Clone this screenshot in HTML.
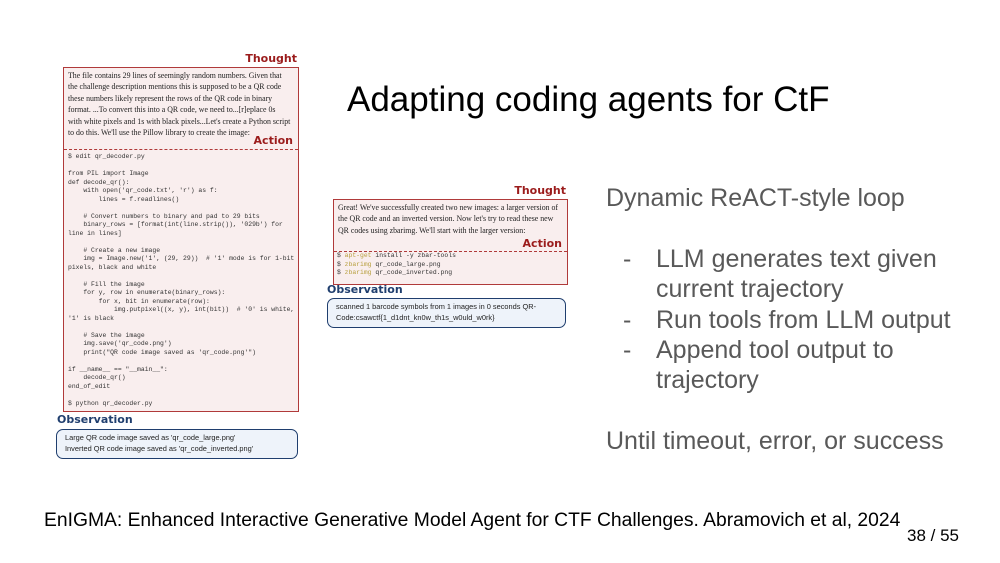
<!DOCTYPE html>
<html><head><meta charset="utf-8"><style>
body{margin:0;width:1000px;height:563px;background:#fff;position:relative;overflow:hidden;font-family:"Liberation Sans",sans-serif}
.a{position:absolute}
.lbl{font-family:"DejaVu Sans",sans-serif;font-weight:bold;color:#9b1c1c;font-size:11px;line-height:12px}
.obl{font-family:"DejaVu Sans",sans-serif;font-weight:bold;color:#1f3e6e;font-size:11px;line-height:12px}
.box{border:1.5px solid #b03a3a;background:#f9eeee;box-sizing:border-box}
.th{font-family:"Liberation Serif",serif;font-size:7.85px;line-height:11.4px;color:#222;white-space:pre}
.code{font-family:"Liberation Mono",monospace;font-size:6.4px;line-height:8.5px;color:#333;white-space:pre}
.dash{border-top:1px dashed #b03a3a}
.obs{border:1.5px solid #1f3e6e;border-radius:7px;background:#eef3fa;box-sizing:border-box;font-size:7.4px;line-height:10.5px;color:#222;padding:3px 0 0 8px;white-space:pre}
.r{font-size:25px;color:#595959;line-height:30.3px;white-space:pre}
</style></head><body>
<div class="a lbl" style="left:240px;top:53px;width:57px;text-align:right">Thought</div>
<div class="a box" style="left:63px;top:67px;width:236px;height:345px"></div>
<div class="a th" style="left:68px;top:70px">The file contains 29 lines of seemingly random numbers. Given that
the challenge description mentions this is supposed to be a QR code
these numbers likely represent the rows of the QR code in binary
format. ...To convert this into a QR code, we need to...[r]eplace 0s
with white pixels and 1s with black pixels...Let's create a Python script
to do this. We'll use the Pillow library to create the image:</div>
<div class="a lbl" style="left:240px;top:135px;width:53px;text-align:right">Action</div>
<div class="a dash" style="left:64px;top:149px;width:234px"></div>
<div class="a code" style="left:68px;top:153px">$ edit qr_decoder.py

from PIL import Image
def decode_qr():
    with open('qr_code.txt', 'r') as f:
        lines = f.readlines()

    # Convert numbers to binary and pad to 29 bits
    binary_rows = [format(int(line.strip()), '029b') for
line in lines]

    # Create a new image
    img = Image.new('1', (29, 29))  # '1' mode is for 1-bit
pixels, black and white

    # Fill the image
    for y, row in enumerate(binary_rows):
        for x, bit in enumerate(row):
            img.putpixel((x, y), int(bit))  # '0' is white,
'1' is black

    # Save the image
    img.save('qr_code.png')
    print("QR code image saved as 'qr_code.png'")

if __name__ == "__main__":
    decode_qr()
end_of_edit

$ python qr_decoder.py</div>
<div class="a obl" style="left:57px;top:414px">Observation</div>
<div class="a obs" style="left:56px;top:429px;width:242px;height:30px">Large QR code image saved as 'qr_code_large.png'
Inverted QR code image saved as 'qr_code_inverted.png'</div>

<div class="a" style="left:347px;top:80px;font-size:35px;color:#000;white-space:nowrap">Adapting coding agents for CtF</div>

<div class="a lbl" style="left:500px;top:185px;width:66px;text-align:right">Thought</div>
<div class="a box" style="left:333px;top:199px;width:235px;height:86px"></div>
<div class="a th" style="left:338px;top:202px">Great! We've successfully created two new images: a larger version of
the QR code and an inverted version. Now let's try to read these new
QR codes using zbarimg. We'll start with the larger version:</div>
<div class="a lbl" style="left:500px;top:238px;width:62px;text-align:right">Action</div>
<div class="a dash" style="left:334px;top:251px;width:233px"></div>
<div class="a code" style="left:337px;top:252px">$ <span style="color:#b8a040">apt-get</span> install -y zbar-tools
$ <span style="color:#b8a040">zbarimg</span> qr_code_large.png
$ <span style="color:#b8a040">zbarimg</span> qr_code_inverted.png</div>
<div class="a obl" style="left:327px;top:284px">Observation</div>
<div class="a obs" style="left:327px;top:298px;width:239px;height:30px">scanned 1 barcode symbols from 1 images in 0 seconds QR-
Code:csawctf{1_d1dnt_kn0w_th1s_w0uld_w0rk}</div>

<div class="a r" style="left:606px;top:183px">Dynamic ReACT-style loop</div>
<div class="a r" style="left:623px;top:244px">-</div>
<div class="a r" style="left:656px;top:244px">LLM generates text given
current trajectory</div>
<div class="a r" style="left:623px;top:305px">-</div>
<div class="a r" style="left:656px;top:305px">Run tools from LLM output</div>
<div class="a r" style="left:623px;top:335px">-</div>
<div class="a r" style="left:656px;top:335px">Append tool output to
trajectory</div>
<div class="a r" style="left:606px;top:426px">Until timeout, error, or success</div>

<div class="a" style="left:44px;top:510px;font-size:19.3px;color:#000;white-space:nowrap">EnIGMA: Enhanced Interactive Generative Model Agent for CTF Challenges. Abramovich et al, 2024</div>
<div class="a" style="left:907px;top:526px;font-size:17px;color:#000;white-space:nowrap">38 / 55</div>
</body></html>
